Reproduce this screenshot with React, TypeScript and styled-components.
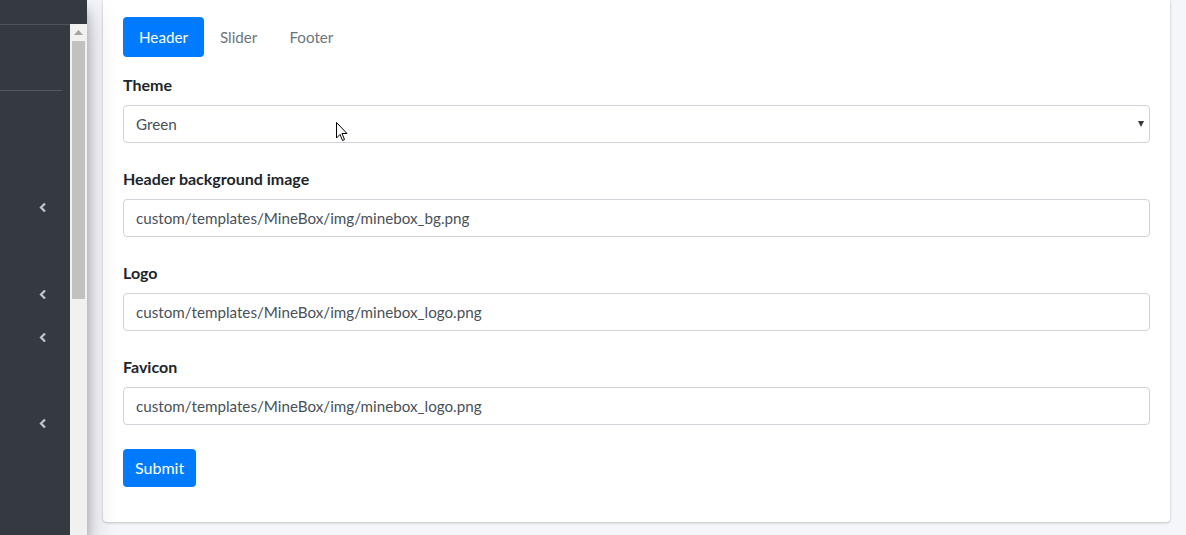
import React from "react";
import styled, { createGlobalStyle } from "styled-components";

const Global = createGlobalStyle`
  html, body { margin: 0; padding: 0; }
  body {
    font-family: Lato, "Liberation Sans", sans-serif;
    font-size: 16px;
    line-height: 1.5;
    color: #212529;
    background: #f4f6f9;
    overflow: hidden;
  }
  * { box-sizing: border-box; }
`;

const Layout = styled.div`
  display: flex;
  width: 1186px;
  height: 535px;
  position: relative;
`;

const Sidebar = styled.aside`
  width: 87px;
  flex: none;
  background: #343a40;
  display: flex;
  flex-direction: column;
  box-shadow: 0 14px 28px rgba(0, 0, 0, 0.25), 0 10px 10px rgba(0, 0, 0, 0.22);
  z-index: 2;
`;

const Brand = styled.div`
  height: 25px;
  width: 70px;
  border-bottom: 1px solid #4b545c;
  flex: none;
`;

const SideBody = styled.div`
  flex: 1;
  display: flex;
  margin-top: -1px;
`;

const SideNav = styled.div`
  width: 70px;
  display: flex;
  flex-direction: column;
`;

const UserPanel = styled.div`
  height: 67px;
  margin-right: 8px;
  border-bottom: 1px solid #4f5962;
  flex: none;
`;

const NavList = styled.ul`
  list-style: none;
  margin: 0;
  padding: 10px 0 0;
  display: flex;
  flex-direction: column;
`;

const NavItem = styled.li`
  height: 40px;
  margin-bottom: 3.25px;
  display: flex;
  align-items: center;
  justify-content: flex-end;
  padding-right: 23px;
  color: #c2c7d0;
`;

const Track = styled.div`
  width: 17px;
  background: #f1f1f1;
  display: flex;
  flex-direction: column;
  align-items: center;
`;

const ArrowBtn = styled.div`
  height: 17px;
  width: 17px;
  display: flex;
  align-items: center;
  justify-content: center;
  flex: none;
`;

const Thumb = styled.div`
  width: 13px;
  height: 258px;
  background: #c1c1c1;
`;

const Main = styled.main`
  flex: 1;
  padding: 0 16px;
`;

const Card = styled.section`
  background: #fff;
  border-radius: 0 0 4px 4px;
  box-shadow: 0 0 1px rgba(0, 0, 0, 0.125), 0 1px 3px rgba(0, 0, 0, 0.2);
  padding: 17px 20px 35px;
  display: flex;
  flex-direction: column;
`;

const Tabs = styled.div`
  display: flex;
  margin-bottom: 16px;
`;

const Tab = styled.div<{ $active?: boolean }>`
  height: 40px;
  padding: 8px 16px;
  border-radius: 4px;
  font-size: 15.2px;
  line-height: 24px;
  color: ${(p) => (p.$active ? "#fff" : "#6c757d")};
  background: ${(p) => (p.$active ? "#007bff" : "transparent")};
`;

const Group = styled.div`
  display: flex;
  flex-direction: column;
  margin-bottom: 24px;
`;

const Label = styled.label`
  font-weight: 700;
  line-height: 24px;
  margin-bottom: 8px;
  color: #212529;
`;

const Field = styled.div`
  height: 38px;
  border: 1px solid #ced4da;
  border-radius: 4px;
  padding: 6px 12px;
  font-size: 15.2px;
  line-height: 24px;
  color: #495057;
  display: flex;
  align-items: center;
  justify-content: space-between;
`;

const Caret = styled.span`
  width: 0;
  height: 0;
  border-left: 3.5px solid transparent;
  border-right: 3.5px solid transparent;
  border-top: 6px solid #343a40;
  margin-right: -7px;
`;

const SubmitRow = styled.div`
  display: flex;
`;

const Button = styled.button`
  height: 38px;
  padding: 6px 12px;
  border: none;
  border-radius: 4px;
  background: #007bff;
  color: #fff;
  font: inherit;
  font-size: 16px;
  line-height: 24px;
`;

const Cursor = styled.svg`
  position: absolute;
  left: 336px;
  top: 122px;
  z-index: 5;
`;

const Chevron = () => (
  <svg width="8" height="11" viewBox="0 0 8 11">
    <polyline points="6,1.5 2,5.5 6,9.5" fill="none" stroke="#c2c7d0" strokeWidth="2.2" />
  </svg>
);

const navRows = [false, false, true, false, true, true, false, true, false, false];

const fields = [
  { label: "Header background image", value: "custom/templates/MineBox/img/minebox_bg.png" },
  { label: "Logo", value: "custom/templates/MineBox/img/minebox_logo.png" },
  { label: "Favicon", value: "custom/templates/MineBox/img/minebox_logo.png" },
];

export default function App() {
  return (
    <>
      <Global />
      <Layout>
        <Sidebar>
          <Brand />
          <SideBody>
            <SideNav>
              <UserPanel />
              <NavList>
                {navRows.map((c, i) => (
                  <NavItem key={i}>{c && <Chevron />}</NavItem>
                ))}
              </NavList>
            </SideNav>
            <Track>
              <ArrowBtn>
                <svg width="9" height="5" viewBox="0 0 9 5">
                  <polygon points="0,5 4.5,0 9,5" fill="#a3a3a3" />
                </svg>
              </ArrowBtn>
              <Thumb />
            </Track>
          </SideBody>
        </Sidebar>
        <Main>
          <Card>
            <Tabs>
              <Tab $active>Header</Tab>
              <Tab>Slider</Tab>
              <Tab>Footer</Tab>
            </Tabs>
            <Group>
              <Label>Theme</Label>
              <Field>
                <span>Green</span>
                <Caret />
              </Field>
            </Group>
            {fields.map((f) => (
              <Group key={f.label}>
                <Label>{f.label}</Label>
                <Field>{f.value}</Field>
              </Group>
            ))}
            <SubmitRow>
              <Button>Submit</Button>
            </SubmitRow>
          </Card>
        </Main>
        <Cursor width="12" height="20" viewBox="0 0 12 20">
          <path d="M0.5,0.5 L0.5,16 L4,12.5 L6.5,18.5 L8.5,17.5 L6,11.5 L11,11.5 Z" fill="#fff" stroke="#000" strokeWidth="1" />
        </Cursor>
      </Layout>
    </>
  );
}
